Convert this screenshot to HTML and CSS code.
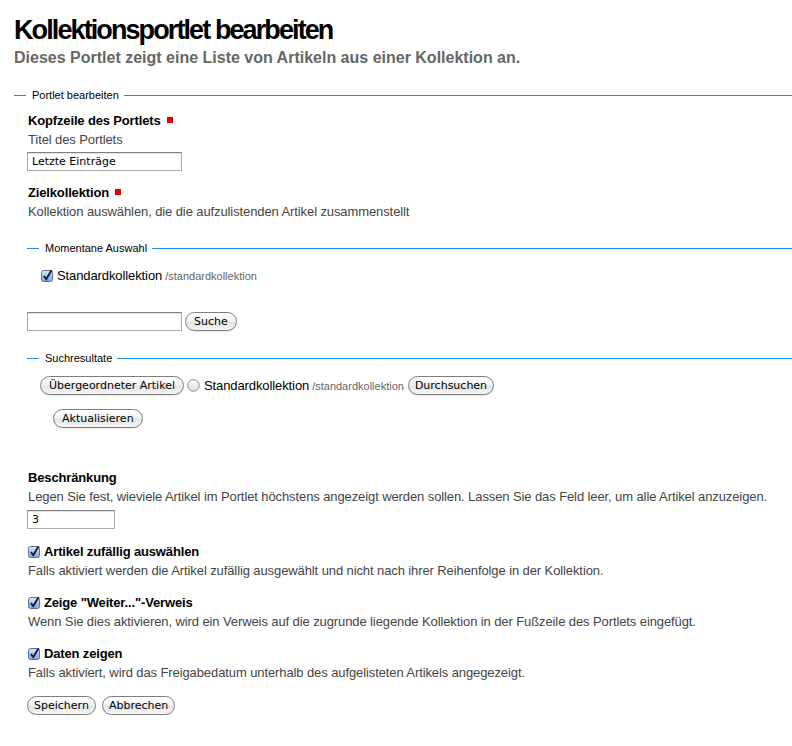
FILE: index.html
```html
<!DOCTYPE html>
<html lang="de">
<head>
<meta charset="utf-8">
<title>Kollektionsportlet bearbeiten</title>
<link rel="stylesheet" href="styles.css">
</head>
<body>
<h1 class="title">Kollektionsportlet bearbeiten</h1>
<p class="lead">Dieses Portlet zeigt eine Liste von Artikeln aus einer Kollektion an.</p>
<form class="form">
  <fieldset class="group">
    <legend class="legend">Portlet bearbeiten</legend>

    <div class="field">
      <label class="label">Kopfzeile des Portlets<span class="required"></span></label>
      <div class="help">Titel des Portlets</div>
      <input class="text text-wide" type="text" value="Letzte Einträge">
    </div>

    <div class="field field-gap">
      <label class="label">Zielkollektion<span class="required"></span></label>
      <div class="help">Kollektion auswählen, die die aufzulistenden Artikel zusammenstellt</div>

      <fieldset class="sub sub-current">
        <legend class="legend">Momentane Auswahl</legend>
        <div class="row current">
          <svg class="check" width="13" height="13" viewBox="0 0 13 13"><defs><linearGradient id="cg1" x1="0" y1="0" x2="0" y2="1"><stop offset="0" stop-color="#dce9f9"/><stop offset="1" stop-color="#7ea5db"/></linearGradient></defs><rect x="0.5" y="1.5" width="11" height="11" rx="2" fill="url(#cg1)" stroke="#5b7199"/><path d="M2.8 7 L5.3 10 L10.6 1.2" fill="none" stroke="#0f1e3a" stroke-width="1.9"/></svg>
          <span class="item">Standardkollektion</span> <span class="path">/standardkollektion</span>
        </div>
      </fieldset>

      <div class="search">
        <input class="text text-wide" type="text" value="">
        <button class="btn btn-suche" type="button">Suche</button>
      </div>

      <fieldset class="sub sub-results">
        <legend class="legend">Suchresultate</legend>
        <div class="row results">
          <button class="btn" type="button">Übergeordneter Artikel</button>
          <svg class="radio" width="13" height="13" viewBox="0 0 13 13"><defs><linearGradient id="rg1" x1="0" y1="0" x2="0" y2="1"><stop offset="0" stop-color="#ffffff"/><stop offset="1" stop-color="#dcdcdc"/></linearGradient></defs><circle cx="6.5" cy="6.5" r="5.8" fill="url(#rg1)" stroke="#8c8c8c"/></svg>
          <span class="item">Standardkollektion</span> <span class="path">/standardkollektion</span>
          <button class="btn" type="button">Durchsuchen</button>
        </div>
        <div class="update">
          <button class="btn btn-update" type="button">Aktualisieren</button>
        </div>
      </fieldset>
    </div>

    <div class="field field-limit">
      <label class="label">Beschränkung</label>
      <div class="help">Legen Sie fest, wieviele Artikel im Portlet höchstens angezeigt werden sollen. Lassen Sie das Feld leer, um alle Artikel anzuzeigen.</div>
      <input class="text text-short" type="text" value="3">
    </div>

    <div class="field field-check">
      <label class="label"><svg class="check" width="13" height="13" viewBox="0 0 13 13"><defs><linearGradient id="cg2" x1="0" y1="0" x2="0" y2="1"><stop offset="0" stop-color="#dce9f9"/><stop offset="1" stop-color="#7ea5db"/></linearGradient></defs><rect x="0.5" y="1.5" width="11" height="11" rx="2" fill="url(#cg2)" stroke="#5b7199"/><path d="M2.8 7 L5.3 10 L10.6 1.2" fill="none" stroke="#0f1e3a" stroke-width="1.9"/></svg>Artikel zufällig auswählen</label>
      <div class="help">Falls aktiviert werden die Artikel zufällig ausgewählt und nicht nach ihrer Reihenfolge in der Kollektion.</div>
    </div>

    <div class="field field-check">
      <label class="label"><svg class="check" width="13" height="13" viewBox="0 0 13 13"><defs><linearGradient id="cg3" x1="0" y1="0" x2="0" y2="1"><stop offset="0" stop-color="#dce9f9"/><stop offset="1" stop-color="#7ea5db"/></linearGradient></defs><rect x="0.5" y="1.5" width="11" height="11" rx="2" fill="url(#cg3)" stroke="#5b7199"/><path d="M2.8 7 L5.3 10 L10.6 1.2" fill="none" stroke="#0f1e3a" stroke-width="1.9"/></svg>Zeige "Weiter..."-Verweis</label>
      <div class="help">Wenn Sie dies aktivieren, wird ein Verweis auf die zugrunde liegende Kollektion in der Fußzeile des Portlets eingefügt.</div>
    </div>

    <div class="field field-check">
      <label class="label"><svg class="check" width="13" height="13" viewBox="0 0 13 13"><defs><linearGradient id="cg4" x1="0" y1="0" x2="0" y2="1"><stop offset="0" stop-color="#dce9f9"/><stop offset="1" stop-color="#7ea5db"/></linearGradient></defs><rect x="0.5" y="1.5" width="11" height="11" rx="2" fill="url(#cg4)" stroke="#5b7199"/><path d="M2.8 7 L5.3 10 L10.6 1.2" fill="none" stroke="#0f1e3a" stroke-width="1.9"/></svg>Daten zeigen</label>
      <div class="help">Falls aktiviert, wird das Freigabedatum unterhalb des aufgelisteten Artikels angegezeigt.</div>
    </div>

    <div class="actions">
      <button class="btn" type="button">Speichern</button>
      <button class="btn" type="button">Abbrechen</button>
    </div>
  </fieldset>
</form>
</body>
</html>
```

FILE: styles.css
```css
* { box-sizing: border-box; }

body {
  margin: 0;
  padding: 0 0 0 14px;
  background: #fff;
  color: #000;
  font-family: "Liberation Sans", Arial, Helvetica, sans-serif;
  font-size: 13px;
}

.title {
  margin: 14px 0 0;
  font-size: 27px;
  line-height: 32px;
  font-weight: bold;
  letter-spacing: -1.9px;
}

.lead {
  margin: 2px 0 0;
  font-size: 16px;
  line-height: 20px;
  font-weight: bold;
  color: #666;
}

.form { margin: 0; }

.group {
  margin: 21px 0 0;
  padding: 9px 0 0 14px;
  border: 0;
  border-top: 1px solid #1f8ad6;
  min-width: 0;
}

.legend {
  margin-left: -2px;
  padding: 0 5px 0 6px;
  font-size: 11px;
  line-height: 13px;
  color: #000;
}

.label {
  display: block;
  font-weight: bold;
  line-height: 19px;
  letter-spacing: -0.15px;
}

.required {
  display: inline-block;
  width: 6px;
  height: 6px;
  margin-left: 6px;
  background: #ee0000;
  vertical-align: 2px;
}

.help {
  line-height: 19px;
  color: #444;
  letter-spacing: -0.1px;
}

.text {
  display: block;
  height: 19px;
  margin: 3px 0 0 -1px;
  padding: 0 4px;
  border: 1px solid #a8a8a8;
  border-top-color: #808080;
  box-shadow: inset 0 1px 1px rgba(0, 0, 0, 0.12);
  background: #fff;
  font-family: "DejaVu Sans", "Lucida Grande", sans-serif;
  font-size: 11px;
  color: #000;
}

.text-wide { width: 155px; }
.text-short { width: 88px; }

.field-gap { margin-top: 12px; }

.sub {
  margin: 21px 0 0 -1px;
  padding: 11px 0 0 14px;
  border: 0;
  border-top: 1px solid #1f8ad6;
  min-width: 0;
}

.row {
  display: flex;
  align-items: center;
  height: 19px;
  white-space: nowrap;
}

.current .check { margin-right: 3px; }

.item {
  font-size: 13px;
  color: #000;
  letter-spacing: -0.1px;
}

.path {
  margin-left: 3px;
  font-size: 11px;
  color: #666;
}

.search {
  display: flex;
  align-items: center;
  gap: 3px;
  margin-top: 27px;
}

.search .text { margin-top: 0; }

.sub-results { margin-top: 21px; }

.results { margin-left: -1px; }
.results .btn:first-child { padding: 0 8px; }
.results .radio { margin: 0 4px 0 3px; }
.results .btn:last-child { margin-left: 4px; }

.update {
  margin: 14px 0 0 12px;
}

.btn {
  height: 19px;
  padding: 0 6px;
  border: 1px solid #7d7d7d;
  border-radius: 10px;
  background: linear-gradient(#ffffff 0%, #f4f4f4 45%, #e4e4e4 55%, #f6f6f6 100%);
  box-shadow: 0 1px 0 rgba(0, 0, 0, 0.08);
  font-family: "DejaVu Sans", "Lucida Grande", sans-serif;
  font-size: 11px;
  line-height: 17px;
  color: #000;
}

.btn-suche { padding: 0 8px; }
.btn-update { padding: 0 8px; }

.field-limit { margin-top: 40px; }

.field-limit .text { margin-top: 4px; }

.field-check { margin-top: 13px; }

.field-check .label {
  display: flex;
  align-items: center;
  gap: 3px;
}

.actions {
  display: flex;
  gap: 6px;
  margin: 14px 0 0 -1px;
}
```
